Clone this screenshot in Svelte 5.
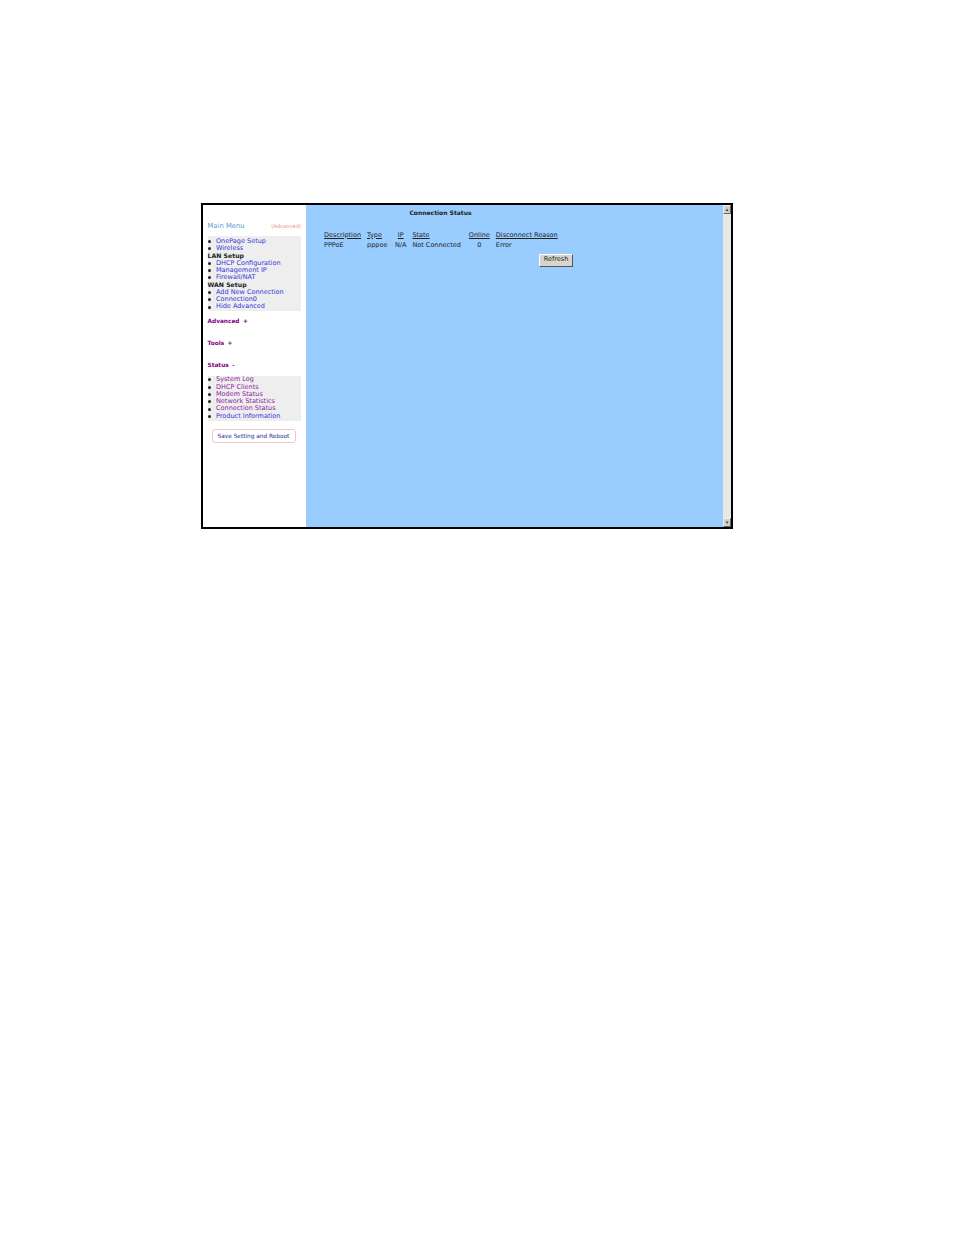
<script>
  const setup = ['OnePage Setup', 'Wireless'];
  const lan = ['DHCP Configuration', 'Management IP', 'Firewall/NAT'];
  const wan = ['Add New Connection', 'Connection0', 'Hide Advanced'];
  const status = ['System Log', 'DHCP Clients', 'Modem Status', 'Network Statistics', 'Connection Status'];
  const columns = ['Description', 'Type', 'IP', 'State', 'Online', 'Disconnect Reason'];
  const values = ['PPPoE', 'pppoe', 'N/A', 'Not Connected', '0', 'Error'];
</script>

{#snippet links(items, cls)}
  {#each items as item}
    <div class="item {cls}"><i></i><span>{item}</span></div>
  {/each}
{/snippet}

<div class="frame">
  <aside class="sidebar">
    <div class="menu-head">
      <span class="main-menu">Main Menu</span>
      <span class="advanced">(Advanced)</span>
    </div>
    <div class="group first">
      {@render links(setup, 'blue')}
      <div class="label">LAN Setup</div>
      {@render links(lan, 'blue')}
      <div class="label">WAN Setup</div>
      {@render links(wan, 'blue')}
    </div>
    <div class="section s1">Advanced +</div>
    <div class="section s2">Tools +</div>
    <div class="section s2">Status -</div>
    <div class="group second">
      {@render links(status, 'purple')}
      {@render links(['Product Information'], 'blue')}
    </div>
    <div class="save">Save Setting and Reboot</div>
  </aside>

  <main class="content">
    <h1>Connection Status</h1>
    <table>
      <thead>
        <tr>
          {#each columns as col}<th><u>{col}</u></th>{/each}
        </tr>
      </thead>
      <tbody>
        <tr>
          {#each values as val}<td>{val}</td>{/each}
        </tr>
      </tbody>
    </table>
    <div class="actions"><button>Refresh</button></div>
  </main>

  <div class="scrollbar">
    <div class="arrow">▴</div>
    <div class="arrow">▾</div>
  </div>
</div>

<style>
  :global(body) {
    background: #fff;
  }

  .frame {
    width: 528px;
    height: 322px;
    margin: 203px 0 0 201px;
    border: 2px solid #000;
    display: flex;
    font-family: "DejaVu Sans", Verdana, sans-serif;
    font-size: 6.5px;
    line-height: 7.3px;
    background: #fff;
  }

  .sidebar {
    width: 103px;
    flex: none;
    padding: 0 5px 0 4.5px;
    box-sizing: border-box;
  }

  .menu-head {
    display: flex;
    justify-content: space-between;
    align-items: baseline;
    margin-top: 18px;
    height: 10px;
  }

  .main-menu {
    color: #5b9bd5;
    font-size: 6.8px;
  }

  .advanced {
    color: #f08a8a;
    font-size: 5.2px;
  }

  .group {
    background: #eee;
  }

  .group.first {
    margin-top: 3.2px;
    padding-top: 1.5px;
  }

  .group.second {
    margin-top: 6.5px;
    padding-bottom: 0.5px;
  }

  .item {
    display: flex;
    align-items: center;
    height: 7.3px;
  }

  .item i {
    width: 3px;
    height: 3px;
    border-radius: 50%;
    background: #222;
    margin: 0 5px 0 0.5px;
    flex: none;
  }

  .blue {
    color: #3535dc;
  }

  .purple {
    color: #8e1a9e;
  }

  .label {
    font-weight: bold;
    color: #222;
    height: 7.3px;
    font-size: 6.2px;
  }

  .section {
    color: #800080;
    font-weight: bold;
    font-size: 5.8px;
    word-spacing: 1.5px;
  }

  .s1 {
    margin-top: 7.8px;
  }

  .s2 {
    margin-top: 14.7px;
  }

  .save {
    margin: 8px 0 0 4px;
    width: 84px;
    height: 14px;
    box-sizing: border-box;
    border: 1px solid #f3c4c4;
    border-radius: 3px;
    color: #2a2a9a;
    font-size: 5.8px;
    text-align: center;
    line-height: 12px;
  }

  .content {
    flex: 1;
    background: #99ccff;
    color: #222;
  }

  h1 {
    margin: 3.5px 0 0 0;
    width: 269px;
    text-align: center;
    font-size: 6px;
    line-height: 8px;
    font-weight: bold;
  }

  table {
    border-collapse: separate;
    border-spacing: 0;
    margin: 14px 0 0 18px;
  }

  th, td {
    padding: 0 6px 0 0;
    font-weight: normal;
    white-space: nowrap;
    height: 9.5px;
    text-align: left;
  }

  th {
    height: 10px;
  }

  th:nth-child(2), td:nth-child(2) {
    padding-right: 7.5px;
  }

  th:nth-child(3), td:nth-child(3) {
    padding-right: 6px;
    text-align: center;
  }

  th:nth-child(4), td:nth-child(4) {
    padding-right: 8px;
  }

  th:nth-child(5), td:nth-child(5) {
    text-align: center;
  }

  .actions {
    margin: 3.5px 0 0 233px;
  }

  button {
    width: 34px;
    height: 13px;
    padding: 0;
    font: inherit;
    color: #222;
    background: #d8d6cc;
    border: 1px solid;
    border-color: #fff #555 #555 #fff;
  }

  .scrollbar {
    width: 8px;
    flex: none;
    background: #e8e8e4;
    display: flex;
    flex-direction: column;
    justify-content: space-between;
  }

  .arrow {
    height: 9px;
    background: #d4d0c8;
    border: 1px solid;
    border-color: #eee #666 #666 #eee;
    box-sizing: border-box;
    color: #333;
    font-size: 5px;
    line-height: 7px;
    text-align: center;
  }
</style>
